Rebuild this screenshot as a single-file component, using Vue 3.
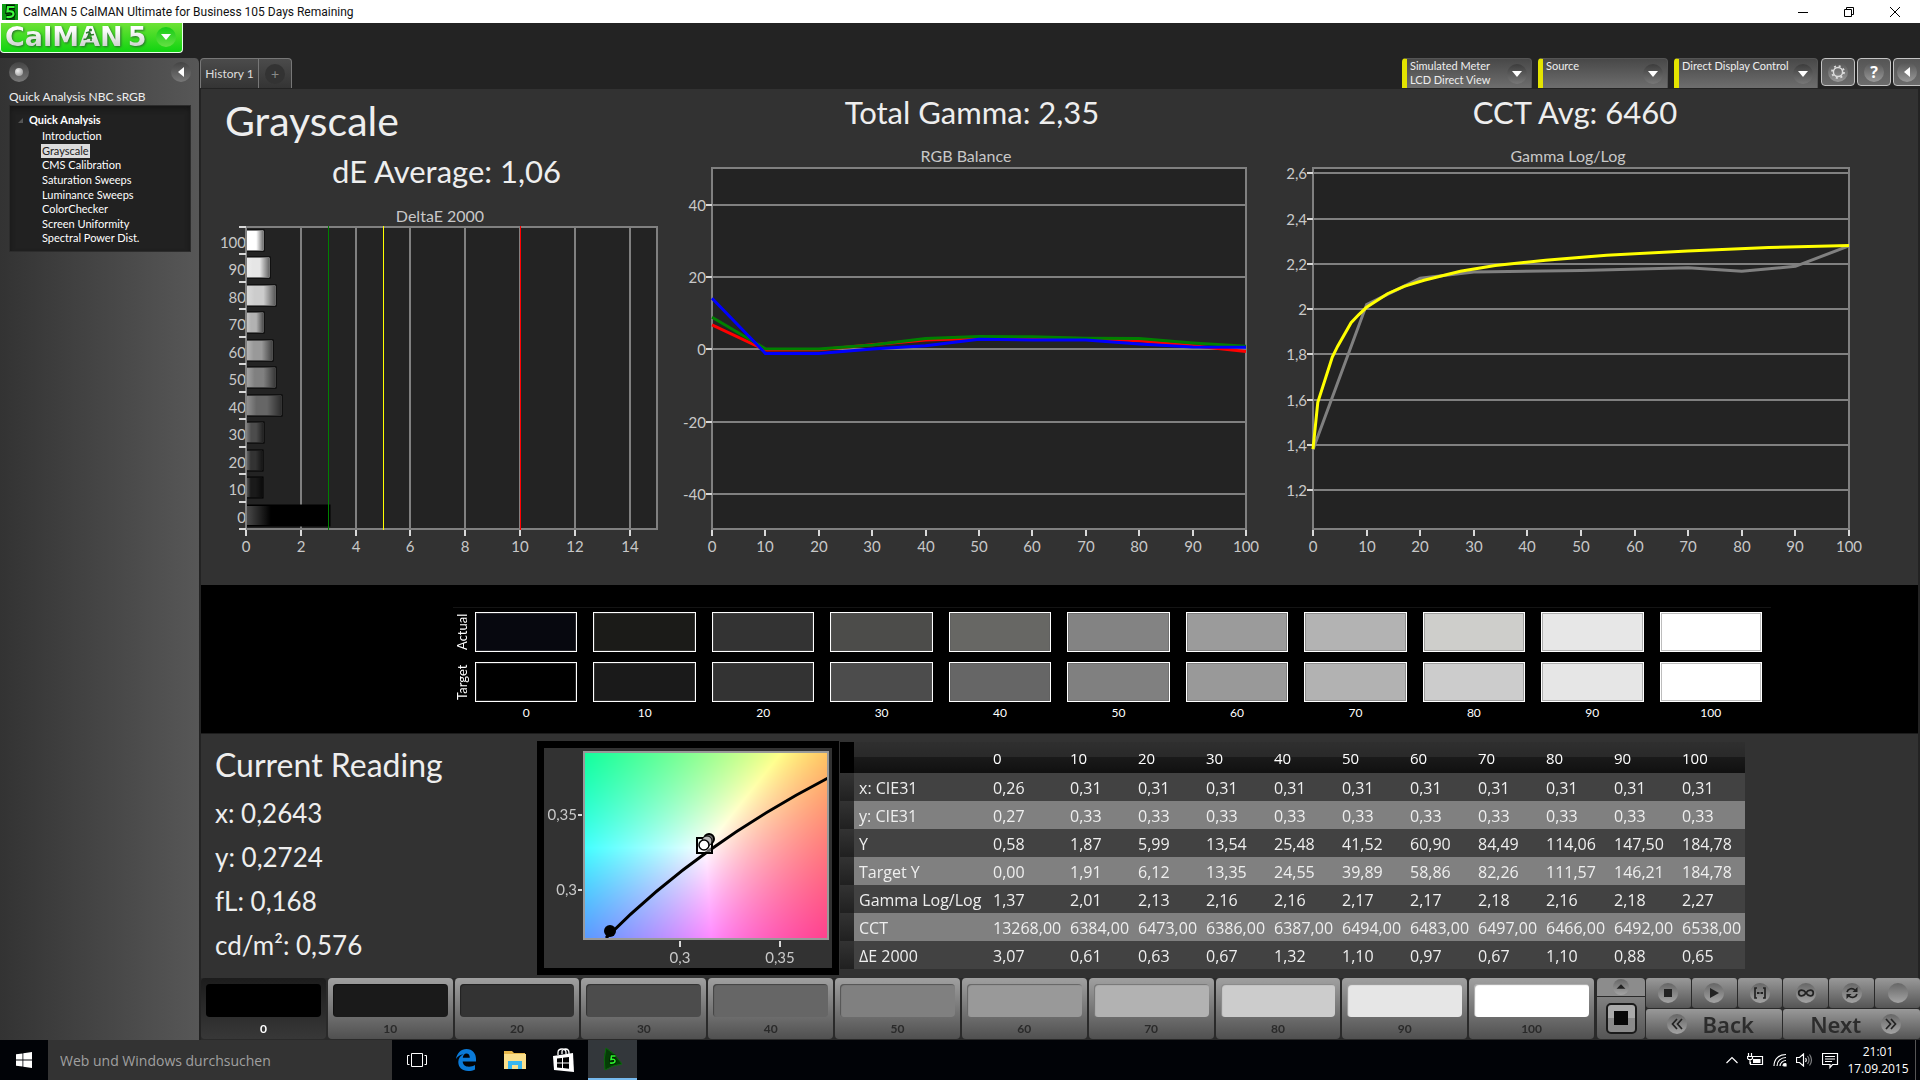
<script setup>
import { onMounted, ref } from 'vue'

const pages = ['Introduction', 'Grayscale', 'CMS Calibration', 'Saturation Sweeps', 'Luminance Sweeps', 'ColorChecker', 'Screen Uniformity', 'Spectral Power Dist.']

const devices = [
  { lines: ['Simulated Meter', 'LCD Direct View'], cls: 'meter' },
  { lines: ['Source'], cls: 'source' },
  { lines: ['Direct Display Control'], cls: 'display' }
]

const levels = [0, 10, 20, 30, 40, 50, 60, 70, 80, 90, 100]
const target = ['#000000', '#1a1a1a', '#333333', '#4c4c4c', '#666666', '#808080', '#999999', '#b2b2b2', '#cccccc', '#e6e6e6', '#ffffff']
const actual = ['#07080f', '#1b1b18', '#333333', '#4c4c4a', '#676764', '#838383', '#9b9b9b', '#b3b3b3', '#cececb', '#e7e7e7', '#ffffff']
const swatchRows = [
  { name: 'Actual', colors: actual },
  { name: 'Target', colors: target }
]

/* DeltaE bar chart, brightest level on top */
const deltaE = [3.07, 0.61, 0.63, 0.67, 1.32, 1.1, 0.97, 0.67, 1.1, 0.88, 0.65]
const bars = levels.map((level, i) => {
  const top = Math.round(38 + (10 - i) * 27.45)
  return { level, color: target[i], top, width: Math.round(deltaE[i] * 27.4) }
})
const barX = (v) => Math.round(45 + v * 27.4)
const barTicks = Array.from({ length: 12 }, (_, i) => Math.round(38 + i * 27.45))

/* Line charts */
const percent = levels
function lineChart(o) {
  const px = (v) => o.x + (v / 100) * o.w
  const line = (pts) => pts.map(([a, b]) => `${px(a).toFixed(1)},${o.py(b).toFixed(1)}`).join(' ')
  return {
    ...o,
    xt: percent.map((v) => ({ v, x: Math.round(px(v)) })),
    yt: o.grid.map((v) => ({ v: String(v).replace('.', ','), y: Math.round(o.py(v)) })),
    lines: o.series.map((s) => ({ color: s.color, points: line(s.pts) }))
  }
}
const zip = (ys) => ys.map((y, i) => [i * 10, y])
const lineCharts = [
  lineChart({
    heading: 'Total Gamma: 2,35', title: 'RGB Balance', cls: 'balance', titleX: 286,
    width: 590, x: 32, w: 534, grid: [40, 20, 0, -20, -40], py: (v) => 215.4 - v * 3.605,
    series: [
      { color: '#ff0000', pts: zip([6.8, -0.2, -0.1, 1.3, 2.6, 3.1, 3.1, 3, 2.4, 1, -0.6]) },
      { color: '#008000', pts: zip([8.9, 0.2, 0.1, 1.2, 3, 3.6, 3.5, 3.1, 3, 1.8, 0.9]) },
      { color: '#0000ff', pts: zip([14.2, -1.1, -1.1, 0.1, 1, 2.8, 2.6, 2.6, 1.5, 0.7, 0.6]) }
    ]
  }),
  lineChart({
    heading: 'CCT Avg: 6460', title: 'Gamma Log/Log', cls: 'gamma', titleX: 298,
    width: 648, x: 43, w: 536, grid: [2.6, 2.4, 2.2, 2, 1.8, 1.6, 1.4, 1.2], py: (v) => 39.2 + (2.6 - v) * 226.5,
    series: [
      { color: '#808080', pts: [[0, 1.38], [10, 2.02], [20, 2.136], [30, 2.164], [50, 2.17], [70, 2.183], [80, 2.167], [90, 2.189], [100, 2.279]] },
      { color: '#ffff00', pts: [[0, 1.382], [0.9, 1.588], [3.6, 1.788], [4.6, 1.836], [7.1, 1.94], [8.5, 1.975], [10, 2.008], [13.9, 2.068], [17, 2.1], [20.7, 2.127], [27.5, 2.167], [34, 2.193], [43.4, 2.216], [54.8, 2.238], [69.9, 2.257], [85, 2.272], [100, 2.281]] }
    ]
  })
]

const readings = ['x: 0,2643', 'y: 0,2724', 'fL: 0,168', 'cd/m²: 0,576']

const rows = [
  ['x: CIE31', '0,26', '0,31', '0,31', '0,31', '0,31', '0,31', '0,31', '0,31', '0,31', '0,31', '0,31'],
  ['y: CIE31', '0,27', '0,33', '0,33', '0,33', '0,33', '0,33', '0,33', '0,33', '0,33', '0,33', '0,33'],
  ['Y', '0,58', '1,87', '5,99', '13,54', '25,48', '41,52', '60,90', '84,49', '114,06', '147,50', '184,78'],
  ['Target Y', '0,00', '1,91', '6,12', '13,35', '24,55', '39,89', '58,86', '82,26', '111,57', '146,21', '184,78'],
  ['Gamma Log/Log', '1,37', '2,01', '2,13', '2,16', '2,16', '2,17', '2,17', '2,18', '2,16', '2,18', '2,27'],
  ['CCT', '13268,00', '6384,00', '6473,00', '6386,00', '6387,00', '6494,00', '6483,00', '6497,00', '6466,00', '6492,00', '6538,00'],
  ['ΔE 2000', '3,07', '0,61', '0,63', '0,67', '1,32', '1,10', '0,97', '0,67', '1,10', '0,88', '0,65']
]

/* Chromaticity field: linear RGB of each xy point, scaled to full brightness */
const field = ref(null)
onMounted(() => {
  const c = field.value
  const g = c.getContext('2d')
  const img = g.createImageData(c.width, c.height)
  for (let j = 0; j < c.height; j++) {
    for (let i = 0; i < c.width; i++) {
      const x = 0.252 + i / 2000
      const y = 0.3915 - j / 1520
      const X = x / y
      const Z = (1 - x - y) / y
      const r = Math.max(0, 3.2406 * X - 1.5372 - 0.4986 * Z)
      const gr = Math.max(0, -0.9689 * X + 1.8758 + 0.0415 * Z)
      const b = Math.max(0, 0.0557 * X - 0.204 + 1.057 * Z)
      const m = 255 / Math.max(r, gr, b)
      img.data.set([r * m, gr * m, b * m, 255], (j * c.width + i) * 4)
    }
  }
  g.putImageData(img, 0, 0)
})
</script>

<template>
  <div class="desktop">
    <header class="titlebar">
      <svg class="app-icon" viewBox="0 0 16 16" aria-hidden="true">
        <rect width="16" height="16" fill="#04570a" />
        <path d="M0 0h4v16H0zM13 0h3v16h-3z" fill="#0c9c12" />
        <path d="M12.500 3H6L5.500 7.500q6-1 6 2.500T4.500 13" fill="none" stroke="#021802" stroke-width="4" />
        <path d="M12.500 3H6L5.500 7.500q6-1 6 2.500T4.500 13" fill="none" stroke="#3dfc3d" stroke-width="2.200" />
      </svg>
      <span class="title">CalMAN 5 CalMAN Ultimate for Business 105 Days Remaining</span>
      <div class="win-buttons">
        <button aria-label="Minimize"><svg viewBox="0 0 10 10"><path d="M0 5.500h10" /></svg></button>
        <button aria-label="Restore"><svg viewBox="0 0 10 10"><path d="M.5 2.500h7v7h-7zM2.500 2.500v-2h7v7h-2" /></svg></button>
        <button aria-label="Close"><svg viewBox="0 0 10 10"><path d="M0 0l10 10M10 0L0 10" /></svg></button>
      </div>
    </header>

    <div class="logobar">
      <button class="logo" aria-label="CalMAN 5 menu">
        <span class="wordmark">CalMAN</span><span class="wordmark">5</span>
        <svg class="runner" viewBox="0 0 12 14" aria-hidden="true">
          <circle cx="7.500" cy="2" r="1.600" /><path d="M3 5l3-1 2 3 3-.5M6.500 4.500L5 8.500l3 1.500v3M5 8.500L3.500 11 .5 11.500" />
        </svg>
        <span class="logo-drop"><svg viewBox="0 0 10 6"><path d="M0 0h10L5 6z" /></svg></span>
      </button>
    </div>

    <div class="body">
      <aside class="sidebar">
        <div class="side-top">
          <button class="disc" aria-label="Record"><span class="led"></span></button>
          <button class="disc collapse" aria-label="Collapse"><svg viewBox="0 0 6 10"><path d="M6 0v10L0 5z" /></svg></button>
        </div>
        <h2 class="side-title">Quick Analysis NBC sRGB</h2>
        <nav class="tree">
          <div class="tree-head"><svg viewBox="0 0 5 5"><path d="M5 0v5H0z" /></svg>Quick Analysis</div>
          <ul>
            <li v-for="p in pages" :key="p"><a href="#" :class="{ current: p === 'Grayscale' }">{{ p }}</a></li>
          </ul>
        </nav>
      </aside>

      <main class="main">
        <div class="tabs">
          <div class="tab-group">
            <button class="tab">History 1</button>
            <button class="tab add" aria-label="Add history"><span>+</span></button>
          </div>
          <div class="devices">
            <button v-for="d in devices" :key="d.cls" class="device" :class="d.cls">
              <span class="device-text"><span v-for="l in d.lines" :key="l">{{ l }}</span></span>
              <span class="drop"><svg viewBox="0 0 10 6"><path d="M0 0h10L5 6z" /></svg></span>
            </button>
            <button class="tool" aria-label="Settings">
              <svg viewBox="0 0 24 24"><circle cx="12" cy="12" r="5.500" fill="none" stroke="#dcdcdc" stroke-width="1.800" /><circle cx="12" cy="12" r="7.200" fill="none" stroke="#dcdcdc" stroke-width="2.200" stroke-dasharray="2.400 3.255" /></svg>
            </button>
            <button class="tool help" aria-label="Help"><span>?</span></button>
            <button class="tool edge" aria-label="Expand"><span><svg viewBox="0 0 6 10"><path d="M6 0v10L0 5z" fill="#fff" /></svg></span></button>
          </div>
        </div>

        <section class="charts">
          <div class="chart-col">
            <h1>Grayscale</h1>
            <h2 class="metric delta">dE Average: 1,06</h2>
            <svg class="chart" viewBox="0 4 479 392">
              <defs>
                <linearGradient id="shade" x1="0" x2="1" y1="0" y2="0">
                  <stop offset="0" stop-color="#fff" stop-opacity=".3" />
                  <stop offset=".3" stop-color="#fff" stop-opacity="0" />
                  <stop offset=".6" stop-color="#000" stop-opacity="0" />
                  <stop offset="1" stop-color="#000" stop-opacity=".55" />
                </linearGradient>
              </defs>
              <text class="chart-title" x="239" y="33" text-anchor="middle">DeltaE 2000</text>
              <rect class="plot" x="45" y="38" width="411" height="302" />
              <path v-for="v in [2, 4, 6, 8, 10, 12, 14]" :key="v" class="grid" :d="`M${barX(v)} 38V340`" />
              <g v-for="b in bars" :key="b.level">
                <rect :x="45" :y="b.top + 3" :width="b.width" height="21" :fill="b.color" stroke="#000" />
                <rect :x="45" :y="b.top + 4" :width="b.width - 1" height="19" fill="url(#shade)" />
                <text class="tick" x="45" :y="b.top + 21" text-anchor="end">{{ b.level }}</text>
              </g>
              <path class="axis" d="M45 38V340" />
              <path v-for="t in barTicks" :key="t" class="mark" :d="`M38 ${t}h7`" />
              <g v-for="v in [0, 2, 4, 6, 8, 10, 12, 14]" :key="v">
                <path class="mark" :d="`M${barX(v)} 341v6`" />
                <text class="tick" :x="barX(v)" y="363" text-anchor="middle">{{ v }}</text>
              </g>
              <path class="limit" :d="`M${barX(3)} 37V341`" stroke="#008000" />
              <path class="limit" :d="`M${barX(5)} 37V341`" stroke="#ffff00" />
              <path class="limit" :d="`M${barX(10)} 37V341`" stroke="#ff0000" />
            </svg>
          </div>

          <div v-for="c in lineCharts" :key="c.title" class="chart-col">
            <h2 class="metric" :class="c.cls">{{ c.heading }}</h2>
            <svg class="chart" :viewBox="`0 1 ${c.width} 450`">
              <text class="chart-title" :x="c.titleX" y="28" text-anchor="middle">{{ c.title }}</text>
              <rect class="plot" :x="c.x" y="34" :width="c.w" height="361" />
              <g v-for="t in c.yt" :key="t.v">
                <path class="grid" :d="`M${c.x} ${t.y}h${c.w}`" />
                <path class="mark" :d="`M${c.x - 6} ${t.y}h6`" />
                <text class="tick" :x="c.x - 6" :y="t.y + 6" text-anchor="end">{{ t.v }}</text>
              </g>
              <g v-for="t in c.xt" :key="t.v">
                <path class="mark" :d="`M${t.x} 396v6`" />
                <text class="tick" :x="t.x" y="418" text-anchor="middle">{{ t.v }}</text>
              </g>
              <polyline v-for="l in c.lines" :key="l.color" :points="l.points" fill="none" :stroke="l.color" stroke-width="3" />
            </svg>
          </div>
        </section>

        <section class="swatches">
          <div class="swatch-grid">
            <template v-for="r in swatchRows" :key="r.name">
              <span class="side-label">{{ r.name }}</span>
              <span v-for="(c, i) in r.colors" :key="i" class="swatch" :style="{ background: c }"></span>
            </template>
            <span></span>
            <span v-for="l in levels" :key="l" class="swatch-label">{{ l }}</span>
          </div>
        </section>

        <section class="details">
          <div class="reading">
            <h2>Current Reading</h2>
            <p v-for="r in readings" :key="r">{{ r }}</p>
          </div>
          <div class="cie">
            <svg viewBox="0 0 288 220">
              <foreignObject x="40" y="4" width="244" height="187"><canvas ref="field" class="field" width="244" height="187"></canvas></foreignObject>
              <path d="M62 190Q153 98 284 30" fill="none" stroke="#000" stroke-width="3" />
              <rect x="40" y="4" width="244" height="187" fill="none" stroke="#999" stroke-width="2" />
              <circle cx="66" cy="183" r="6" />
              <rect x="153" y="90" width="15" height="15" fill="#fff" fill-opacity=".4" stroke="#000" stroke-width="2" />
              <circle cx="165" cy="91" r="5" fill="#666" stroke="#000" stroke-width="2" />
              <circle cx="163" cy="93" r="5" fill="#bbb" stroke="#000" />
              <circle cx="160" cy="97" r="5" fill="#fff" stroke="#000" stroke-width="1.500" />
              <path class="mark" d="M34 67h4M34 142h4M136 193v6M236 193v6" />
              <text class="tick" x="33" y="72" text-anchor="end">0,35</text>
              <text class="tick" x="33" y="147" text-anchor="end">0,3</text>
              <text class="tick" x="136" y="215" text-anchor="middle">0,3</text>
              <text class="tick" x="236" y="215" text-anchor="middle">0,35</text>
            </svg>
          </div>
          <table class="data">
            <thead>
              <tr><td class="gutter"></td><td class="name"></td><th v-for="l in levels" :key="l" scope="col" :class="{ first: l === 0 }">{{ l }}</th></tr>
            </thead>
            <tbody>
              <tr v-for="r in rows" :key="r[0]">
                <td class="gutter"></td>
                <th scope="row">{{ r[0] }}</th>
                <td v-for="(v, i) in r.slice(1)" :key="i">{{ v }}</td>
              </tr>
            </tbody>
          </table>
        </section>

        <footer class="strip">
          <div class="patches">
            <button v-for="(l, i) in levels" :key="l" class="patch" :class="{ active: l === 0 }">
              <span class="chip" :style="{ background: target[i] }"></span>{{ l }}
            </button>
          </div>
          <div class="window-ctl">
            <button class="up" aria-label="Raise"><span class="knob"><svg viewBox="0 0 18 18"><path d="M4 11h10L9 6z" /></svg></span></button>
            <div class="target-cell"><button class="target" aria-label="Pattern window"><span></span></button></div>
          </div>
          <div class="transport">
            <button aria-label="Stop"><span class="knob"><svg viewBox="0 0 20 20"><path d="M6 6h8v8H6z" /></svg></span></button>
            <button aria-label="Play"><span class="knob"><svg viewBox="0 0 20 20"><path d="M6 5l9 5-9 5z" /></svg></span></button>
            <button aria-label="Read series"><span class="knob"><svg viewBox="0 0 20 20"><path class="ln" d="M7 5H5v10h2M13 5h2v10h-2" /><path d="M7 9h2v2H7zM9.500 9h1v2h-1zM11 9h2v2h-2z" /></svg></span></button>
            <button aria-label="Continuous"><span class="knob"><svg viewBox="0 0 20 20"><path class="ln" d="M10 10C8 7 6.500 7.200 5.500 7.200a2.800 2.800 0 0 0 0 5.600C6.500 12.800 8 13 10 10s3.500-2.800 4.500-2.800a2.800 2.800 0 0 1 0 5.600C13.500 12.800 12 13 10 10z" /></svg></span></button>
            <button aria-label="Refresh"><span class="knob"><svg viewBox="0 0 20 20"><path class="ln" d="M5 9c1-3.500 5.500-4.500 8-2M15 11c-1 3.500-5.500 4.500-8 2" /><path d="M15.500 4v5h-5zM4.500 16v-5h5z" /></svg></span></button>
            <button aria-label="Blank"><span class="knob"></span></button>
            <button class="wide"><span class="knob"><svg viewBox="0 0 20 20"><path class="ln" d="M10 5l-4.500 5 4.500 5M15 5l-4.500 5 4.500 5" /></svg></span>Back</button>
            <button class="wide next">Next<span class="knob"><svg viewBox="0 0 20 20"><path class="ln" d="M5 5l4.500 5L5 15M10 5l4.500 5-4.500 5" /></svg></span></button>
          </div>
        </footer>
      </main>
    </div>

    <footer class="taskbar">
      <button class="start" aria-label="Start"><svg viewBox="0 0 16 16" fill="#fff"><path d="M0 2.300L6.500 1.400V7.600H0zM7.300 1.300L16 0V7.600H7.300zM0 8.400H6.500V14.600L0 13.700zM7.300 8.400H16V16L7.300 14.700z" /></svg></button>
      <input class="search" type="text" aria-label="Search" placeholder="Web und Windows durchsuchen" />
      <button class="task" aria-label="Task view"><svg width="20" height="16" viewBox="0 0 20 16" fill="none" stroke="#fff"><path d="M4.500 1.500h11v13h-11zM2.500 3.500h-2v9h2M17.500 3.500h2v9h-2" /></svg></button>
      <button class="task" aria-label="Edge"><svg width="20" height="22" viewBox="0 0 20 22"><path fill="#0a7ad8" d="M0 10C1 4 5 0 10.500 0 16.500 0 20 4.500 20 10v2.500H6.700c.2 3.500 3 5.200 6.300 5.200 2.300 0 4.200-.6 6-1.600v4.300c-2 1.100-4.200 1.600-6.800 1.600-6 0-9.900-3.500-9.900-9 0-3.600 2-6.400 5.200-7.800C4.500 5.600 1.500 7.500 0 10zm6.800-1.200h7c0-2.700-1.300-4.200-3.400-4.200S7.200 6.200 6.800 8.800z" /></svg></button>
      <button class="task" aria-label="Explorer"><svg width="22" height="20" viewBox="0 0 22 20"><path fill="#e8b84a" d="M0 1h8l2 2h11v15H0z" /><path fill="#fbe08c" d="M0 4h22v15H0z" /><path fill="#39b6f0" d="M4 11h14v8h-4v-4H8v4H4z" /></svg></button>
      <button class="task" aria-label="Store"><svg width="22" height="24" viewBox="0 0 22 24"><path d="M5 7V4.500C5 2 6.500 1 9 1s4 1 4 3.500V6M9 6V3.500C9 2 10 1 12.500 1S16 2.500 16 5v1" fill="none" stroke="#fff" stroke-width="1.300" /><path fill="#fff" d="M0 8l20-3 1 19-20-2z" /><path fill="#000" d="M4 10.500l5-.6v4.600H4zM10 9.800l6-.8v5.500h-6zM4 15.500h5V20l-5-.5zM10 15.500h6v5.300l-6-.7z" /></svg></button>
      <button class="task running" aria-label="CalMAN"><svg width="20" height="24" viewBox="0 0 20 24"><path fill="#053d06" stroke="#0a6a0c" d="M3 1q9 5 16 16-9 1-17 6-2-11 1-22z" /><path d="M12.500 9H8.500L8 12.500q4-1 4 1.500t-5 2" fill="none" stroke="#021802" stroke-width="3" /><path d="M12.500 9H8.500L8 12.500q4-1 4 1.500t-5 2" fill="none" stroke="#2df52d" stroke-width="1.600" /></svg></button>
      <div class="tray">
        <svg width="12" height="8" viewBox="0 0 12 8"><path d="M.5 7L6 1.500 11.500 7" /></svg>
        <svg width="17" height="14" viewBox="0 0 17 14"><path d="M5.500 5V3.500h10v8h-12V9M1.500 0v3M4.500 0v3M.5 3.500h5v2l-1 1h-3l-1-1zM3 7v4" /><path d="M6 6h7.500v4H6z" fill="#fff" stroke="none" /></svg>
        <svg width="14" height="14" viewBox="0 0 14 14"><path d="M1 13C1 6 6 1.500 13 1.500M4 13c0-5 4-8.500 9-8.500M7 13c0-3 3-5.500 6-5.500M10 13c0-1.500 1.500-2.500 3-2.500" /><path d="M11 11h2v2h-2z" fill="#fff" /></svg>
        <svg width="17" height="14" viewBox="0 0 17 14"><path d="M.5 4.500h3l4-3.500v12l-4-3.500h-3zM9.500 5q1.500 2 0 4" /><path d="M11.500 3q3 4 0 8M13.500 1.500q4 5.500 0 11" opacity=".5" /></svg>
        <svg width="17" height="17" viewBox="0 0 17 17"><path d="M.5 1.500h15v11h-5l-2.500 3v-3H.5zM3 4.500h10M3 7h10M3 9.500h7" /></svg>
      </div>
      <div class="clock"><span>21:01</span><span>17.09.2015</span></div>
      <span class="show-desktop"></span>
    </footer>
  </div>
</template>

<style>
body { margin: 0; background: #232323; }
</style>

<style scoped>
* { box-sizing: border-box; }
.desktop { min-height: 100vh; display: flex; flex-direction: column; background: #232323; font-family: Lato, sans-serif; color: #eee; overflow: hidden; }
button { margin: 0; padding: 0; border: 0; background: none; font: inherit; color: inherit; }
h1, h2, p, ul { margin: 0; padding: 0; font-weight: 400; }
svg { display: block; }

.titlebar { height: 23px; background: #fff; display: flex; align-items: center; padding-left: 2px; }
.app-icon { width: 16px; height: 16px; margin-right: 5px; }
.title { font: 12px/20px Roboto, sans-serif; color: #111; flex: 1; }
.win-buttons { display: flex; padding-right: 2px; }
.win-buttons button { width: 46px; height: 21px; display: flex; align-items: center; justify-content: center; }
.win-buttons svg { width: 10px; height: 10px; fill: none; stroke: #000; }

.logobar { height: 35px; }
.logo { position: relative; display: flex; align-items: center; width: 183px; height: 30px; padding: 0 0 2px 4px; border: 1px solid #e8ffe8; border-top: 0; border-radius: 0 0 4px 4px; background: linear-gradient(#6ee236, #10d410); }
.wordmark { font: 700 27px/26px "DejaVu Sans", sans-serif; margin-right: 5px; color: transparent; background: linear-gradient(#fff 20%, #c4c9c4); background-clip: text; -webkit-background-clip: text; filter: drop-shadow(1px 1px 1px #27702b); }
.runner { position: absolute; left: 82px; top: 5px; width: 12px; height: 14px; fill: #2d7a2d; }
.runner path { fill: none; stroke: #2d7a2d; stroke-width: 1.5; }
.logo-drop { position: absolute; right: 6px; top: 4px; width: 20px; height: 20px; border-radius: 50%; background: linear-gradient(#15cc15, #66e044); display: flex; align-items: center; justify-content: center; }
.logo-drop svg, .drop svg { width: 10px; height: 6px; fill: #fff; }

.body { flex: 1; display: flex; }
.sidebar { width: 200px; flex: none; border-right: 1px solid #222; border-radius: 0 5px 0 0; background: linear-gradient(90deg, #333, #575757); }
.side-top { display: flex; justify-content: space-between; padding: 4px 8px 0 9px; }
.disc { width: 20px; height: 20px; border-radius: 50%; background: linear-gradient(#444, #777); display: flex; align-items: center; justify-content: center; }
.led { width: 8px; height: 8px; border-radius: 50%; background: radial-gradient(circle at 35% 35%, #eee, #888); }
.collapse svg { width: 6px; height: 10px; fill: #fff; }
.side-title { font-size: 12px; line-height: 17px; padding: 6px 0 0 9px; white-space: nowrap; }
.tree { margin: 0 8px 0 9px; height: 147px; padding: 6px 0 0 8px; background: #212121; border: 1px solid #2c2c2c; box-shadow: inset 0 3px 5px #161616; font-size: 12px; color: #fff; }
.tree-head { display: flex; align-items: center; font-weight: 700; line-height: 16px; font-size: 11px; }
.tree-head svg { width: 5px; height: 5px; fill: #555; margin-right: 6px; }
.tree ul { list-style: none; height: 117px; margin-top: 1px; display: grid; grid-template-rows: repeat(8, 1fr); padding-left: 23px; font-size: 11px; line-height: 14px; }
.tree a { display: inline-block; color: #fff; text-decoration: none; padding: 0 1px; }
.tree a.current { background: #dcdcdc; color: #222; }

.main { flex: 1; min-width: 0; display: flex; flex-direction: column; }
.tabs { height: 31px; display: flex; justify-content: space-between; align-items: flex-start; }
.tab-group { display: flex; height: 30px; border: 1px solid #777; border-bottom: 0; border-radius: 4px 4px 0 0; background: linear-gradient(#4b4b4b, #343434); }
.tab { width: 57px; font-size: 12px; color: #ddd; }
.tab.add { width: 33px; border-left: 1px solid #777; display: flex; align-items: center; justify-content: center; }
.tab.add span { width: 20px; height: 20px; line-height: 19px; border-radius: 50%; background: #333; color: #888; font-size: 14px; }
.devices { display: flex; align-items: flex-start; overflow: hidden; }
.device { height: 30px; width: 130px; margin-right: 6px; padding: 0 4px 0 3px; display: flex; justify-content: space-between; text-align: left; border: 1px solid #555; border-bottom: 0; border-left: 5px solid #e4e400; border-radius: 4px 4px 0 0; background: linear-gradient(#484848, #6e6e6e); font-size: 11px; line-height: 14px; }
.display { width: 144px; margin-right: 3px; }
.device-text { display: flex; flex-direction: column; white-space: nowrap; }
.drop { flex: none; margin-top: 5px; width: 20px; height: 20px; border-radius: 50%; background: linear-gradient(#3c3c3c, #777); display: flex; align-items: center; justify-content: center; }
.tool { width: 34px; height: 28px; margin-right: 2px; border: 1px solid #c4c4c4; border-radius: 4px; background: linear-gradient(#555, #6c6c6c); display: flex; align-items: center; justify-content: center; }
.tool svg { width: 20px; height: 20px; border-radius: 50%; background: linear-gradient(#555, #999); }
.tool span { width: 20px; height: 20px; border-radius: 50%; background: linear-gradient(#555, #999); font: 700 16px/20px "Open Sans", sans-serif; color: #fff; }
.tool.edge { margin-right: -7px; padding-right: 7px; }
.tool.edge span { display: flex; align-items: center; justify-content: center; }
.tool.edge svg { width: 6px; height: 10px; background: none; border-radius: 0; }

.charts, .details { margin: 0 2px 0 1px; background: #323232; }
.charts { display: grid; grid-template-columns: 479fr 590fr 648fr; }
.chart-col { min-width: 0; }
h1 { font-size: 41px; line-height: 64px; padding-left: 24px; }
.metric { font-size: 31px; line-height: 46px; text-align: center; }
.metric.delta { line-height: 36px; padding: 0 0 4px 12px; }
.metric.balance { padding-right: 6px; }
.metric.gamma { padding-right: 38px; }
.chart { width: 100%; height: auto; }
.chart-title { font-size: 16px; fill: #c8c8c8; }
.tick { font-size: 15px; fill: #c8c8c8; }
.plot { fill: #232323; stroke: #808080; stroke-width: 2; }
.grid, .axis { stroke: #808080; stroke-width: 2; }
.mark { stroke: #d8d8d8; stroke-width: 2; }
.limit { stroke-width: 1; shape-rendering: crispEdges; }

.swatches { background: #000; margin: 0 2px 0 1px; height: 149px; padding: 22px 147px 0 252px; border-bottom: 1px solid #1c1c1c; }
.swatch-grid { border-top: 1px solid #141414; padding: 4px 9px 0 0; display: grid; grid-template-columns: 6px repeat(11, minmax(0, 1fr)); column-gap: 16px; row-gap: 10px; grid-template-rows: 40px 40px; }
.side-label { writing-mode: vertical-rl; rotate: 180deg; font-size: 13px; line-height: 18px; width: 18px; text-align: center; color: #fff; }
.swatch { border: 1px solid #fff; box-shadow: inset 0 0 0 1px rgba(90, 90, 90, .4); }
.swatch-label { font-size: 12px; line-height: 16px; text-align: center; color: #fff; margin-top: -7px; }

.details { display: flex; flex: 1; min-height: 244px; padding-top: 7px; }
.reading { width: 336px; flex: none; padding-left: 14px; }
.reading h2 { font-size: 32px; line-height: 47px; height: 50px; }
.reading p { font-size: 26px; line-height: 44px; }
.cie { width: 302px; height: 234px; flex: none; border: 7px solid #000; }
.field { display: block; }
.cie svg { width: 288px; height: 220px; }
.data { margin: 1px 0 0 1px; align-self: flex-start; width: 905px; table-layout: fixed; border-collapse: collapse; font-family: "Open Sans", sans-serif; font-size: 16px; color: #eee; }
.data td, .data th { padding: 2px 0 0 5px; height: 28px; line-height: 26px; text-align: left; font-weight: 400; white-space: nowrap; }
.data thead td, .data thead th { height: 31px; padding-top: 2px; font-size: 15px; line-height: 29px; color: #fff; }
.data thead tr { background: linear-gradient(#2f2f2f, #292929 50%, #1a1a1a 50%, #101010); }
.data thead .gutter { background: #000; }
.data .gutter { width: 14px; padding: 0; }
.data tbody .gutter { background: linear-gradient(#333, #202020); }
.data .name { width: 134px; }
.data .first { width: 77px; }
.data tbody tr { background: #424242; }
.data tbody tr:nth-child(even) { background: #808080; }

.strip { display: flex; height: 62px; margin: 0 0 0 1px; background: #2a2a2a; }
.patches { flex: 1; display: grid; grid-template-columns: repeat(11, minmax(0, 1fr)); column-gap: 2px; padding-right: 3px; }
.patch { height: 61px; display: flex; flex-direction: column; align-items: stretch; padding: 6px 5px 0; border-radius: 4px; background: linear-gradient(#a0a0a0, #505050); color: #2a2a2a; font-weight: 700; font-size: 12px; line-height: 20px; text-align: center; }
.patch.active { background: linear-gradient(#1c1c1c, #383838); color: #fff; }
.chip { height: 36px; margin-bottom: 2px; border-radius: 4px; box-shadow: inset 1px 1px 1px rgba(0, 0, 0, .35); }
.window-ctl { width: 48px; margin-right: 1px; }
.up { width: 48px; height: 18px; border-radius: 4px 4px 0 0; background: #8c8c8c; display: flex; align-items: center; justify-content: center; }
.up .knob { width: 16px; height: 16px; }
.target-cell { height: 42px; margin-top: 1px; display: flex; align-items: center; justify-content: center; background: linear-gradient(#808080, #555); border-radius: 0 0 4px 4px; }
.target { width: 31px; height: 31px; border: 2px solid #1a1a1a; border-radius: 5px; background: linear-gradient(#aaa 50%, #8a8a8a 50%); display: flex; align-items: center; justify-content: center; }
.target span { width: 14px; height: 14px; background: #080808; }
.transport { width: 274px; display: grid; grid-template-columns: repeat(6, 1fr); grid-template-rows: 30px 30px; gap: 1px; }
.transport button { display: flex; align-items: center; justify-content: center; background: linear-gradient(#999, #555); border-radius: 3px; }
.knob { width: 20px; height: 20px; flex: none; border-radius: 50%; background: linear-gradient(#666, #a4a4a4); }
.knob svg { fill: #222; width: 100%; height: 100%; }
.ln { fill: none; stroke: #222; stroke-width: 1.7; }
.transport .wide { grid-column: span 3; font: 600 22px/30px "Noto Sans", sans-serif; color: #2c2c2c; gap: 16px; padding-right: 8px; }
.transport .next { gap: 20px; padding: 0 0 0 8px; }

.taskbar { height: 40px; background: #010307; display: flex; align-items: stretch; font-family: "Open Sans", sans-serif; }
.start { width: 48px; display: flex; align-items: center; justify-content: center; }
.start svg { width: 16px; height: 16px; }
.search { width: 344px; border: 0; border-radius: 0; background: #333; padding: 2px 0 0 12px; font: 14px/20px "Open Sans", sans-serif; color: #fff; }
.search::placeholder { color: #a0a0a0; opacity: 1; }
.task { width: 49px; display: flex; align-items: center; justify-content: center; }
.running { background: #33373b; border-bottom: 2px solid #76b9ed; }
.tray { margin-left: auto; display: flex; align-items: center; gap: 9px; }
.tray svg { fill: none; stroke: #fff; stroke-width: 1.2; }
.clock { width: 76px; display: flex; flex-direction: column; justify-content: center; padding-left: 2px; text-align: center; font-size: 12px; line-height: 17px; color: #fff; }
.show-desktop { width: 5px; border-left: 1px solid #555; }
</style>
